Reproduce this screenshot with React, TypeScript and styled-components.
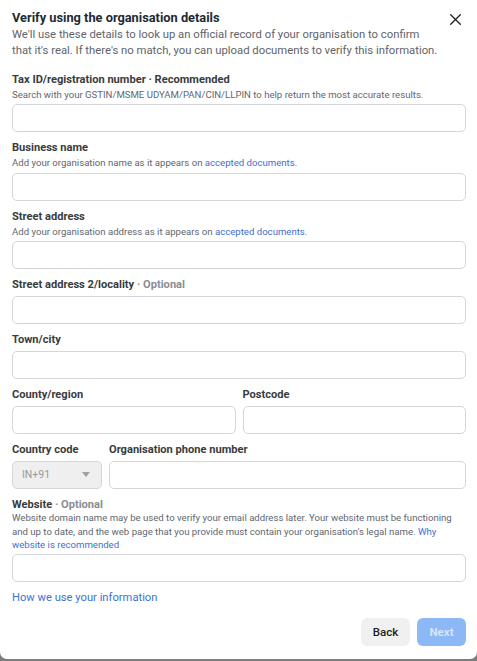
import React from "react";
import styled, { createGlobalStyle } from "styled-components";

const Global = createGlobalStyle`
  html, body { margin: 0; padding: 0; background: #7d7d7d; }
  body { font-family: Roboto, "Liberation Sans", Arial, sans-serif; }
  * { box-sizing: border-box; }
`;

const Backdrop = styled.div`
  width: 477px;
  height: 661px;
  background: #7d7d7d;
  overflow: hidden;
`;

const Modal = styled.div`
  height: 659px;
  background: #ffffff;
  border-radius: 0 0 7px 7px;
  padding: 9px 11px 0 12px;
  display: flex;
  flex-direction: column;
`;

const Header = styled.div`
  display: flex;
  align-items: flex-start;
  justify-content: space-between;
`;

const Title = styled.h1`
  margin: 0;
  font-size: 12.8px;
  line-height: 18px;
  font-weight: 700;
  color: #1c2b33;
`;

const Close = styled.button`
  border: 0;
  background: none;
  padding: 0;
  margin: 3px 4px 0 0;
  width: 14px;
  height: 14px;
  display: flex;
  align-items: center;
  justify-content: center;
  cursor: pointer;
`;

const Desc = styled.p`
  margin: 0 0 13px 0;
  font-size: 11.3px;
  line-height: 16px;
  color: #5f6368;
`;

const Form = styled.div`
  display: flex;
  flex-direction: column;
  gap: 8px;
`;

const Field = styled.div`
  display: flex;
  flex-direction: column;
  min-width: 0;
`;

const Label = styled.label`
  font-size: 11.1px;
  line-height: 16px;
  font-weight: 700;
  color: #3a3b3c;
`;

const Muted = styled.span`
  color: #8a8d91;
`;

const Help = styled.div<{ $tight?: boolean }>`
  margin-top: ${(p) => (p.$tight ? "-1.5px" : "0")};
  font-size: 9.6px;
  line-height: 13.3px;
  color: #606770;
`;

const Link = styled.a`
  color: #3b6fd4;
  text-decoration: none;
  cursor: pointer;
`;

const Input = styled.input`
  margin-top: 3px;
  height: 28px;
  width: 100%;
  border: 1px solid #d3d6db;
  border-radius: 5px;
  background: #fff;
  font: inherit;
  font-size: 11px;
  padding: 0 8px;
  outline: none;
`;

const Row = styled.div<{ $cols: string }>`
  display: grid;
  grid-template-columns: ${(p) => p.$cols};
  column-gap: 7px;
`;

const Select = styled.div`
  margin-top: 3px;
  height: 28px;
  border: 1px solid #d3d6db;
  border-radius: 5px;
  background: #efefef;
  display: flex;
  align-items: center;
  justify-content: space-between;
  padding: 0 11px 0 9px;
  font-size: 10.5px;
  color: #9a9a9a;
`;

const InfoLink = styled(Link)`
  margin-top: 8px;
  font-size: 11.2px;
  line-height: 16px;
  color: #3b72d6;
`;

const Footer = styled.div`
  margin-top: 12px;
  display: flex;
  justify-content: flex-end;
  gap: 7px;
`;

const Button = styled.button<{ $primary?: boolean }>`
  width: 49px;
  height: 28px;
  border: 0;
  border-radius: 6px;
  font-family: inherit;
  font-size: 11.5px;
  font-weight: ${(p) => (p.$primary ? 700 : 500)};
  background: ${(p) => (p.$primary ? "#8cb9f6" : "#f0f0f0")};
  color: ${(p) => (p.$primary ? "#d4e5fc" : "#1c1e21")};
  cursor: pointer;
`;

export default function App() {
  return (
    <>
      <Global />
      <Backdrop>
        <Modal>
          <Header>
            <Title>Verify using the organisation details</Title>
            <Close aria-label="Close">
              <svg width="11" height="11" viewBox="0 0 11 11">
                <path d="M0.7 0.7 L10.3 10.3 M10.3 0.7 L0.7 10.3" stroke="#1c1e21" strokeWidth="1.3" strokeLinecap="round" />
              </svg>
            </Close>
          </Header>
          <Desc>
            We'll use these details to look up an official record of your organisation to confirm
            <br />
            that it's real. If there's no match, you can upload documents to verify this information.
          </Desc>
          <Form>
            <Field>
              <Label>Tax ID/registration number · Recommended</Label>
              <Help>Search with your GSTIN/MSME UDYAM/PAN/CIN/LLPIN to help return the most accurate results.</Help>
              <Input />
            </Field>
            <Field>
              <Label>Business name</Label>
              <Help>
                Add your organisation name as it appears on <Link>accepted documents</Link>.
              </Help>
              <Input />
            </Field>
            <Field>
              <Label>Street address</Label>
              <Help>
                Add your organisation address as it appears on <Link>accepted documents</Link>.
              </Help>
              <Input />
            </Field>
            <Field>
              <Label>
                Street address 2/locality <Muted>· Optional</Muted>
              </Label>
              <Input />
            </Field>
            <Field>
              <Label>Town/city</Label>
              <Input />
            </Field>
            <Row $cols="1fr 1fr">
              <Field>
                <Label>County/region</Label>
                <Input />
              </Field>
              <Field>
                <Label>Postcode</Label>
                <Input />
              </Field>
            </Row>
            <Row $cols="90px 1fr">
              <Field>
                <Label>Country code</Label>
                <Select>
                  <span>IN+91</span>
                  <svg width="8" height="5" viewBox="0 0 8 5">
                    <path d="M0 0 L8 0 L4 5 Z" fill="#a0a0a0" />
                  </svg>
                </Select>
              </Field>
              <Field>
                <Label>Organisation phone number</Label>
                <Input />
              </Field>
            </Row>
            <Field>
              <Label>
                Website <Muted>· Optional</Muted>
              </Label>
              <Help $tight>
                Website domain name may be used to verify your email address later. Your website must be functioning and up to date, and the web page that you provide must contain your organisation's legal name. <Link>Why website is recommended</Link>
              </Help>
              <Input />
            </Field>
          </Form>
          <InfoLink>How we use your information</InfoLink>
          <Footer>
            <Button>Back</Button>
            <Button $primary>Next</Button>
          </Footer>
        </Modal>
      </Backdrop>
    </>
  );
}
